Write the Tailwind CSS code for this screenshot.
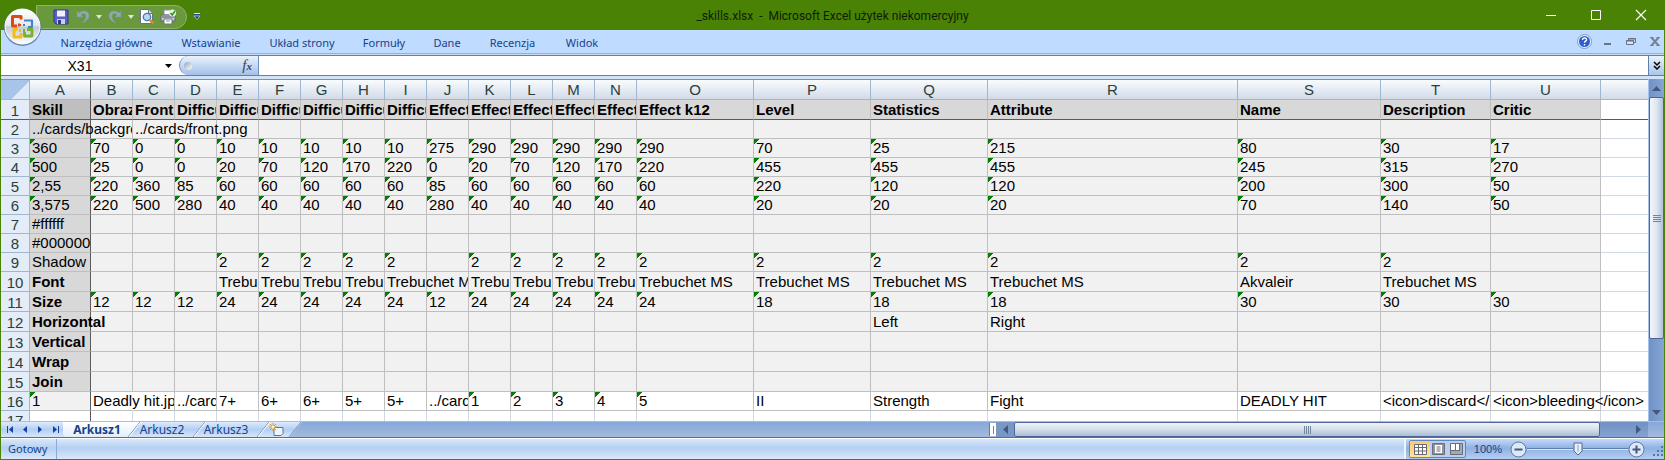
<!DOCTYPE html>
<html lang="pl">
<head>
<meta charset="utf-8">
<title>_skills.xlsx - Microsoft Excel użytek niekomercyjny</title>
<script src="https://cdn.jsdelivr.net/npm/@tailwindcss/browser@4"></script>
</head>
<body class="h-screen overflow-hidden bg-[#498205] font-['Noto_Sans',sans-serif] text-[11px] text-[#15428b]">
<div class="relative flex h-full flex-col px-px pb-px">

  <!-- Title bar -->
  <header class="relative flex h-[30px] shrink-0 items-center justify-end">
    <h1 class="absolute inset-x-0 top-[7px] text-center font-['Roboto',sans-serif] text-xs leading-[18px] text-[#101c04]">_skills.xlsx &nbsp;-&nbsp; Microsoft Excel użytek niekomercyjny</h1>
    <div class="absolute left-[35px] top-[5px] flex h-6 w-[151px] items-center rounded-r-full border border-[#8fb167] bg-[#6a983c] pl-4">
      <button aria-label="Zapisz" class="w-[22px]"><svg width="16" height="16" viewBox="0 0 16 16"><path d="M1 1h14v14H3l-2-2z" fill="#5a5fc4" stroke="#31368c"/><path d="M4 1.500h8v6H4z" fill="#eef3ff"/><path d="M4 10h8v5H4z" fill="#c9cfe6"/><path d="M5 11h3v4H5z" fill="#31368c"/></svg></button>
      <button aria-label="Cofnij" class="w-4"><svg width="16" height="16" viewBox="0 0 16 16"><path d="M2 2v6h6L5.800 6C8 3.500 11.500 4.500 11 8c-.3 2.500-2 4-4 6 4-1.500 7-4 7-7.500C14 2 8 .5 4 4z" fill="#8fa9b4" stroke="#7b9a98" stroke-width=".6"/></svg></button>
      <button aria-label="Lista cofania" class="w-4"><svg width="9" height="5" viewBox="0 0 9 5" class="ml-1"><path d="M1 0h6L4 4z" fill="#dfe8d4"/></svg></button>
      <button aria-label="Ponów" class="w-4"><svg width="16" height="16" viewBox="0 0 16 16"><path d="M14 2v6H8l2.200-2C8 3.500 4.500 4.500 5 8c.3 2.500 2 4 4 6-4-1.500-7-4-7-7.500C2 2 8 .5 12 4z" fill="#8fa9b4" stroke="#7b9a98" stroke-width=".6"/></svg></button>
      <button aria-label="Lista ponawiania" class="w-4"><svg width="9" height="5" viewBox="0 0 9 5" class="ml-1"><path d="M1 0h6L4 4z" fill="#dfe8d4"/></svg></button>
      <button aria-label="Podgląd wydruku" class="w-[21px]"><svg width="16" height="16" viewBox="0 0 16 16"><path d="M1.500.5h8l4 4v10h-12z" fill="#fff" stroke="#63748c"/><path d="M9.500.5v4h4" fill="#d5deea" stroke="#63748c"/><circle cx="8" cy="8" r="3.700" fill="#b5daf3" stroke="#50779e" stroke-width="1.300"/><path d="m11 11 3.500 3.500" stroke="#d98a28" stroke-width="2.500"/></svg></button>
      <button aria-label="Szybkie drukowanie" class="w-4"><svg width="17" height="16" viewBox="0 0 17 16"><path d="M4 1h7v5H4z" fill="#fff" stroke="#8793a3"/><path d="M1 6h14v6H1z" fill="#c5c9d1" stroke="#5f6673"/><path d="M4 10h8v5H4z" fill="#fff" stroke="#6e7682"/><path d="M2 8h12" stroke="#555c68"/><path d="M6 12h4" stroke="#6c9ad0"/><circle cx="12.500" cy="4" r="3.500" fill="#e5f5db"/><path d="m10.500 4 1.700 2L15 2" fill="none" stroke="#2b9a22" stroke-width="1.600"/></svg></button>
    </div>
    <button aria-label="Dostosuj pasek" class="absolute left-[192px] top-[13px]"><svg width="8" height="8" viewBox="0 0 8 8"><path d="M1 0h6v2H1z" fill="#dbe8f7"/><path d="M1 1h6v1H1z" fill="#243e7c"/><path d="M1 3h6L4 6.500z" fill="#243e7c" stroke="#dbe8f7" stroke-width=".6"/></svg></button>
    <div class="flex pr-px text-white">
      <button aria-label="Minimalizuj" class="w-[45px]"><svg width="12" height="12" viewBox="0 0 12 12" class="mx-auto"><path d="M1 6.500h10" stroke="currentColor"/></svg></button>
      <button aria-label="Maksymalizuj" class="w-[45px]"><svg width="12" height="12" viewBox="0 0 12 12" class="mx-auto"><path d="M1.500 1.500h9v9h-9z" fill="none" stroke="currentColor"/></svg></button>
      <button aria-label="Zamknij" class="w-[45px]"><svg width="12" height="12" viewBox="0 0 12 12" class="mx-auto"><path d="m1 1 10 10M11 1 1 11" stroke="currentColor" stroke-width="1.200"/></svg></button>
    </div>
  </header>

  <!-- Office button overlapping the title bar and the ribbon -->
  <button aria-label="Przycisk pakietu Office" class="absolute left-[3px] top-[7px] z-10"><svg width="39" height="40" viewBox="0 0 39 40">
    <defs><linearGradient id="orb" x2="0" y2="1"><stop stop-color="#fff"/><stop offset=".46" stop-color="#e6e9ee"/><stop offset=".52" stop-color="#c3ccd8"/><stop offset="1" stop-color="#fff"/></linearGradient></defs>
    <circle cx="19.500" cy="20.200" r="18.700" fill="#46648c" opacity=".7"/><circle cx="19.500" cy="19.500" r="17.500" fill="url(#orb)" stroke="#fff"/>
    <g fill="none" stroke-width="3" stroke-linejoin="round"><path d="M18 12.500V9.500h-8.500v9.500H14" stroke="#dc4a12"/><path d="M21 13.500h8v6.500h-4" stroke="#3f87c8" stroke-width="2.200"/><path d="M14.500 22.500H11v7.500h7v-4" stroke="#f5bb1c"/><path d="M24 22.500h5v6.500h-7.500V25" stroke="#75b133" stroke-width="2.800"/></g>
    <g stroke-width="2"><path d="M16 16.500v3M16 18h2" stroke="#dc4a12"/><path d="M20 18h2" stroke="#3f87c8"/><path d="M17 22v3" stroke="#f5bb1c"/><path d="M21 22v3" stroke="#75b133"/></g>
  </svg></button>

  <!-- Ribbon tabs -->
  <nav class="flex h-6 shrink-0 items-center border-b border-[#8db2e3] bg-[#bfdbff] pl-[45px]" aria-label="Wstążka">
    <button class="w-[121px] pt-1">Narzędzia główne</button>
    <button class="w-[88px] pt-1">Wstawianie</button>
    <button class="w-[94px] pt-1">Układ strony</button>
    <button class="w-[70px] pt-1">Formuły</button>
    <button class="w-14 pt-1">Dane</button>
    <button class="w-[75px] pt-1">Recenzja</button>
    <button class="w-[64px] pt-1">Widok</button>
    <div class="ml-auto flex items-center gap-3 pr-1">
      <button aria-label="Pomoc"><svg width="15" height="15" viewBox="0 0 15 15"><circle cx="7.500" cy="7.500" r="7" fill="#e8f0fb" stroke="#7c9ac6"/><circle cx="7.500" cy="7.500" r="5.500" fill="#2a5fd0"/><path d="M5.500 6c0-3 4.500-2.500 4 0-.3 1.200-2 1.200-2 2.800M7.500 10v1.500" fill="none" stroke="#fff" stroke-width="1.400"/></svg></button>
      <button aria-label="Minimalizuj skoroszyt" class="pt-1"><svg width="8" height="4" viewBox="0 0 8 4"><path d="M0 1h7v2H0z" fill="#687486"/></svg></button>
      <button aria-label="Przywróć skoroszyt" class="pl-0.5"><svg width="10" height="8" viewBox="0 0 10 8"><path d="M2.500 4V.5h7v4H8M2 1h8" fill="none" stroke="#687486"/><path d="M.5 2.500h7v4h-7zM0 3h8" fill="#d5e4f8" stroke="#687486"/></svg></button>
      <button aria-label="Zamknij skoroszyt" class="pl-0.5"><svg width="10" height="9" viewBox="0 0 10 9"><path d="m1.500.5 7 8M8.500.5l-7 8" stroke="#76808f" stroke-width="2"/><path d="M0 .5h3.500M6.500.5H10M0 8.500h3.500M6.500 8.500H10" stroke="#76808f"/></svg></button>
    </div>
  </nav>

  <!-- Formula bar -->
  <div class="flex h-[26px] shrink-0 border-b-4 border-[#d3e3f7] bg-[#c9dcf5] pt-px">
    <div class="flex flex-1 border-y border-[#5f81b0] bg-white">
      <input aria-label="Pole nazwy" value="X31" class="w-[158px] bg-white text-center font-['Liberation_Sans',Arial,sans-serif] text-sm text-black outline-none">
      <button aria-label="Lista nazw" class="w-5"><svg width="7" height="4" viewBox="0 0 7 4" class="ml-1.5"><path d="M0 0h7L3.500 4z" fill="#000"/></svg></button>
      <div class="flex w-20 items-center justify-between rounded-l-full border-x border-[#6e90bf] bg-linear-to-b from-[#eaf2fc] to-[#a3c1e8] pl-1 pr-1.5">
        <span class="size-2 rounded-full bg-linear-to-br from-[#97a5b8] to-white"></span>
        <button aria-label="Wstaw funkcję" class="font-['Liberation_Serif',serif] text-[15px] leading-none text-[#3c434e] italic">f<span class="text-[11px] font-bold">x</span></button>
      </div>
      <input aria-label="Pasek formuły" class="min-w-0 flex-1 bg-white outline-none">
      <button aria-label="Rozwiń pasek formuły" class="w-4 border-l border-[#5f81b0] bg-linear-to-b from-[#eaf2fc] to-[#a9c6ea]"><svg width="8" height="9" viewBox="0 0 8 9" class="mx-auto"><path d="m1 1 3 3 3-3M1 5l3 3 3-3" fill="none" stroke="#000" stroke-width="1.500"/></svg></button>
    </div>
  </div>

  <!-- Worksheet and vertical scroll bar -->
  <main class="flex min-h-0 flex-1">
    <div class="min-w-0 flex-1 overflow-hidden border-t border-[#6f93c4] bg-white -mt-px">
      <table class="w-full table-fixed border-separate border-spacing-0 font-['Liberation_Sans',Arial,sans-serif] text-[15px] leading-[18px] text-black">
        <colgroup id="cols"></colgroup>
        <thead><tr id="letters" class="h-5"></tr></thead>
        <tbody id="rows"></tbody>
      </table>
    </div>
    <div class="-mt-px flex w-4 flex-col border-l border-[#a5c2ea] bg-linear-to-r from-[#6f92c8] to-[#86a5d2]" role="scrollbar" aria-label="Przewijanie pionowe" aria-controls="rows" aria-valuenow="0">
      <button aria-label="W górę" class="h-[18px] shrink-0"><svg width="9" height="5" viewBox="0 0 9 5" class="mx-auto"><path d="M0 5h9L4.500 0z" fill="#46577f"/></svg></button>
      <div class="flex h-[242px] flex-col items-center justify-center gap-px rounded-xs border border-[#4d6698] bg-linear-to-r from-[#f3f6fa] via-[#dfe6ef] to-[#b0c2da]">
        <i class="h-px w-2 bg-[#76859e]"></i><i class="h-px w-2 bg-[#76859e]"></i><i class="h-px w-2 bg-[#76859e]"></i><i class="h-px w-2 bg-[#76859e]"></i>
      </div>
      <button aria-label="W dół" class="mt-auto h-[18px] shrink-0"><svg width="9" height="5" viewBox="0 0 9 5" class="mx-auto"><path d="M0 0h9L4.500 5z" fill="#46577f"/></svg></button>
    </div>
  </main>

  <!-- Sheet tabs and horizontal scroll bar -->
  <div class="flex h-[17px] shrink-0 border-t border-b border-t-[#9fc0ea] border-b-[#4f719f] bg-linear-to-b from-[#86a8d8] to-[#a3bade]">
    <div class="relative flex w-[303px] text-xs leading-[15px]">
      <svg class="absolute inset-0" width="303" height="15" viewBox="0 0 303 15" aria-hidden="true">
        <defs><linearGradient id="tab" x2="0" y2="1"><stop stop-color="#dceafc"/><stop offset=".5" stop-color="#b3cff3"/><stop offset="1" stop-color="#d6e6fb"/></linearGradient><linearGradient id="active" x2="0" y2="1"><stop stop-color="#fff"/><stop offset="1" stop-color="#e3eefb"/></linearGradient></defs>
        <path d="M0 0h301l-12 15H0z" fill="url(#tab)"/>
        <path d="M62 0h77l-12 15H66c-3 0-4-3-4-5z" fill="url(#active)"/>
        <path d="m139 0-12 15M204 0l-12 15M268 0l-12 15M300 0l-12 15" stroke="#7695c2"/>
        <path d="m140 0-12 15M205 0l-12 15M269 0l-12 15" stroke="#fff"/>
      </svg>
      <div class="relative flex w-[62px] items-center gap-2 pl-1.5">
        <button aria-label="Pierwszy arkusz"><svg width="7" height="7" viewBox="0 0 7 7"><path d="M0 0h1v7H0zM6 0v7L2 3.500z" fill="#17419b"/></svg></button>
        <button aria-label="Poprzedni arkusz"><svg width="7" height="7" viewBox="0 0 7 7"><path d="M5 0v7L1 3.500z" fill="#17419b"/></svg></button>
        <button aria-label="Następny arkusz"><svg width="7" height="7" viewBox="0 0 7 7"><path d="M1 0v7l4-3.500z" fill="#17419b"/></svg></button>
        <button aria-label="Ostatni arkusz"><svg width="7" height="7" viewBox="0 0 7 7"><path d="M6 0h1v7H6zM1 0v7l4-3.500z" fill="#17419b"/></svg></button>
      </div>
      <button class="relative w-[68px] font-bold">Arkusz1</button>
      <button class="relative w-[62px]">Arkusz2</button>
      <button class="relative w-[66px]">Arkusz3</button>
      <button aria-label="Wstaw arkusz" class="relative ml-2.5"><svg width="16" height="14" viewBox="0 0 16 14"><path d="M5 4.500h9v6l-2 2H5z" fill="#eef4fc" stroke="#5b7299"/><path d="M4 0v8M0 4h8M1 1l6 6M7 1 1 7" stroke="#e29420"/><circle cx="4" cy="4" r="1.500" fill="#fff3bd"/></svg></button>
    </div>
    <div class="ml-auto flex w-[675px]" role="scrollbar" aria-label="Przewijanie poziome" aria-controls="rows" aria-orientation="horizontal" aria-valuenow="0">
      <span class="my-px flex w-[7px] items-center justify-center border-l border-[#5a80b6] bg-white"><i class="h-2 w-px bg-[#5a80b6]"></i></span>
      <button aria-label="W lewo" class="w-[18px] bg-[#7797c5]"><svg width="5" height="9" viewBox="0 0 5 9" class="mx-auto"><path d="M5 0v9L0 4.500z" fill="#46577f"/></svg></button>
      <div class="flex flex-1 items-center justify-center gap-px rounded-xs border border-[#4d6698] bg-linear-to-b from-[#f1f4f9] via-[#d5dee9] via-50% to-[#a8bdd6]">
        <i class="h-2 w-px bg-[#76859e]"></i><i class="h-2 w-px bg-[#76859e]"></i><i class="h-2 w-px bg-[#76859e]"></i><i class="h-2 w-px bg-[#76859e]"></i>
      </div>
      <button aria-label="W prawo" class="mr-4 w-12 bg-linear-to-b from-[#7091c3] to-[#85a3d0] pl-7"><svg width="5" height="9" viewBox="0 0 5 9" class="ml-2"><path d="M0 0v9l5-4.500z" fill="#46577f"/></svg></button>
    </div>
  </div>

  <!-- Status bar -->
  <footer class="flex h-[21px] shrink-0 items-stretch border-t border-white bg-linear-to-b from-[#d9e8fc] via-[#b3cff2] via-45% to-[#dbe8fa]">
    <span class="w-14 border-r border-[#8aabd8] pl-[7px] leading-5">Gotowy</span>
    <div class="ml-auto flex w-[260px] items-center border-l-2 border-[#eef5ff] bg-linear-to-b from-[#c4dbfa] via-[#8fb1e2] via-45% to-[#b3cef4] pl-[3px]">
      <div class="flex rounded-xs border border-[#6487bb] bg-[#b9d0f0]">
        <button aria-label="Normalny" class="flex h-4 w-5 items-center justify-center bg-linear-to-b from-[#fbc778] to-[#ffe795]"><svg width="13" height="11" viewBox="0 0 13 11"><path d="M.5.5h12v10H.5zM.5 3.500h12M.5 7h12M4.500.5v10M8.500.5v10" fill="#fff" stroke="#666a72"/></svg></button>
        <button aria-label="Układ strony (widok)" class="flex h-4 w-[17px] items-center justify-center"><svg width="13" height="12" viewBox="0 0 13 12"><path d="M.5.5h12v11H.5z" fill="#8e959f" stroke="#676e79"/><path d="M3 2h7v8H3z" fill="#fff"/><path d="M4.500 4h4M4.500 6h4M4.500 8h4" stroke="#676e79"/></svg></button>
        <button aria-label="Podgląd podziału stron" class="flex h-4 w-[18px] items-center justify-center"><svg width="13" height="12" viewBox="0 0 13 12"><path d="M.5.5h12v11H.5z" fill="#a3a9b2" stroke="#676e79"/><path d="M1 1h4v6H1zM6 1h3v6H6z" fill="#fff"/><path d="M5.500 1v7M9.500 1v7M1 7.500h9" stroke="#676e79"/></svg></button>
      </div>
      <button class="w-9 text-right font-['Liberation_Sans',Arial,sans-serif]">100%</button>
      <div class="ml-1 flex flex-1 items-center">
        <button aria-label="Pomniejsz" class="ml-1"><svg width="17" height="17" viewBox="0 0 17 17" class="block"><circle cx="8.500" cy="8.500" r="7.500" fill="#dce9f9" stroke="#5c7599"/><path d="M4.500 8.500h8" stroke="#46577a" stroke-width="2"/></svg></button>
        <div class="flex flex-1 items-center">
          <span class="h-0.5 flex-1 border-t border-[#5f7fae] bg-[#d6e5fa]"></span>
          <svg width="10" height="14" viewBox="0 0 10 14"><path d="M1 1h8v8l-4 4-4-4z" fill="#e7effa" stroke="#526b92"/><path d="M5 3v7" stroke="#8ba3c6"/></svg>
          <span class="h-0.5 flex-1 border-t border-[#5f7fae] bg-[#d6e5fa]"></span>
        </div>
        <button aria-label="Powiększ"><svg width="17" height="17" viewBox="0 0 17 17" class="block"><circle cx="8.500" cy="8.500" r="7.500" fill="#dce9f9" stroke="#5c7599"/><path d="M4.500 8.500h8M8.500 4.500v8" stroke="#46577a" stroke-width="2"/></svg></button>
      </div>
      <svg width="11" height="11" viewBox="0 0 11 11" class="mb-0.5 ml-2 self-end" aria-hidden="true"><path d="M8 0h2v2H8zM4 4h2v2H4zM8 4h2v2H8zM0 8h2v2H0zM4 8h2v2H4zM8 8h2v2H8z" fill="#5374a6"/></svg>
    </div>
  </footer>
</div>

<script>
const widths = [29, 61, ...Array(13).fill(42), 117, 117, 117, 250, 143, 110, 110, null];
const heights = [20, 19, 19, 19, 19, 19, 19, 19, 19, 20, 20, 20, 20, 20, 20, 19, 19];
const T = 'Trebuchet MS';
const data = [
  ['Skill','Obraz','Front','Difficulty','Difficulty','Difficulty','Difficulty','Difficulty','Difficulty','Effect k1','Effect k2','Effect k4','Effect k6','Effect k8','Effect k12','Level','Statistics','Attribute','Name','Description','Critic'],
  ['../cards/background.png','','../cards/front.png'],
  ['360','70','0','0','10','10','10','10','10','275','290','290','290','290','290','70','25','215','80','30','17'],
  ['500','25','0','0','20','70','120','170','220','0','20','70','120','170','220','455','455','455','245','315','270'],
  ['2,55','220','360','85','60','60','60','60','60','85','60','60','60','60','60','220','120','120','200','300','50'],
  ['3,575','220','500','280','40','40','40','40','40','280','40','40','40','40','40','20','20','20','70','140','50'],
  ['#ffffff'],
  ['#000000'],
  ['Shadow','','','','2','2','2','2','2','','2','2','2','2','2','2','2','2','2','2',''],
  ['Font','','','',T,T,T,T,T,'',T,T,T,T,T,T,T,T,'Akvaleir',T,''],
  ['Size','12','12','12','24','24','24','24','24','12','24','24','24','24','24','18','18','18','30','30','30'],
  ['Horizontal','','','','','','','','','','','','','','','','Left','Right'],
  ['Vertical'], ['Wrap'], ['Join'],
  ['1','Deadly hit.jpg','','../cards/back.png','7+','6+','6+','5+','5+','../cards/back.png','1','2','3','4','5','II','Strength','Fight','DEADLY HIT','<icon>discard</icon>','<icon>bleeding</icon>'],
  []
];
const marked = /^(\d|,)+$/;

widths.forEach(w => {
  const col = document.createElement('col');
  if (w) col.style.width = w + 'px';
  document.getElementById('cols').append(col);
});

const letters = document.getElementById('letters');
[''].concat([...'ABCDEFGHIJKLMNOPQRSTU'], ['']).forEach((letter, i) => {
  const th = document.createElement('th');
  th.scope = 'col';
  th.className = 'h-5 overflow-hidden border-r border-b border-[#9eb6ce] bg-linear-to-b from-[#f9fcfd] to-[#d3dbe9] p-0 text-center font-normal text-[#27413e]';
  if (i === 0) th.className = 'h-5 border-r border-b border-[#9eb6ce] bg-[#a9c4e9] bg-[linear-gradient(135deg,transparent_62%,#e0ebf9_62%)] p-0';
  if (i === 1) th.classList.add('border-r-[#5a5a5a]');
  if (i === 22) th.classList.add('border-r-0');
  th.textContent = letter;
  letters.append(th);
});

data.forEach((row, r) => {
  const tr = document.createElement('tr');
  tr.style.height = heights[r] + 'px';
  const head = document.createElement('th');
  head.scope = 'row';
  head.className = 'border-r border-b border-[#9eb6ce] bg-[#e4ecf7] p-0 text-center align-bottom leading-4 font-normal text-[#27413e]';
  if (r === 0) head.classList.add('border-b-[#5a5a5a]');
  head.textContent = r + 1;
  tr.append(head);
  for (let c = 0; c < 22; c++) {
    const text = row[c] || '';
    const td = document.createElement('td');
    td.className = 'border-r border-b p-0 align-bottom';
    const filled = c < 21 && r < 15;
    let fill = 'bg-white';
    if (filled) fill = 'bg-[#f1f1f1]';
    if (filled && (c === 0 || r === 0)) fill = 'bg-[#d8d8d8]';
    if (c === 0 && r === 0) fill = 'bg-[#bfbfbf]';
    if (c === 0 && r === 15) fill = 'bg-[#f1f1f1]';
    td.classList.add(fill);
    td.classList.add(c < 21 && r < 16 ? 'border-[#bfbfbf]' : 'border-[#d0d7e5]');
    if (c === 0) td.classList.add('border-r-[#5a5a5a]');
    if (r === 0) td.classList.add('border-b-[#5a5a5a]');
    if (c === 21) td.classList.add('border-r-0');
    if (marked.test(text)) td.classList.add('bg-[linear-gradient(135deg,#008000_4px,transparent_4px)]', 'bg-no-repeat');
    // A long text runs over the empty cells to its right and is cut at the next filled one.
    let span = widths[c + 1] || 0, next = c + 1;
    while (next < 22 && !row[next]) { span += widths[next + 1] || 48; next++; }
    if (text) {
      const box = document.createElement('div');
      box.className = 'overflow-hidden pl-0.5 whitespace-nowrap';
      if (r === 0 || (c === 0 && r > 8 && r < 15)) box.classList.add('font-bold');
      box.style.width = (span - 1) + 'px';
      box.textContent = text;
      td.append(box);
      if (next > c + 1 && text.length > 12 && c > 0 && c < 20) td.classList.add('border-r-transparent');
    }
    tr.append(td);
  }
  document.getElementById('rows').append(tr);
});
</script>
</body>
</html>
